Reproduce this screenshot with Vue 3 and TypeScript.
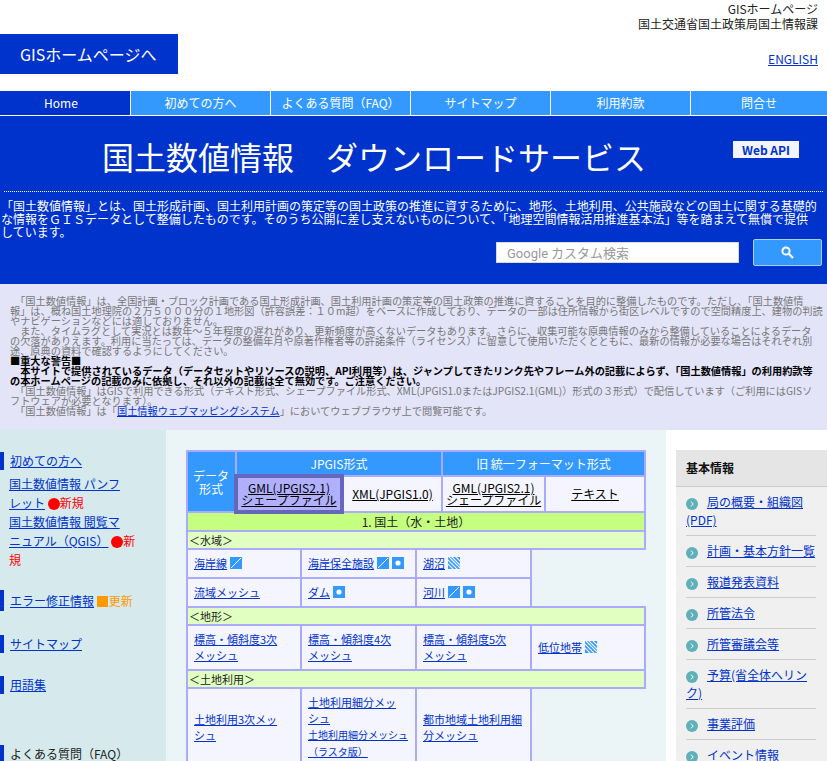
<template>
  <div class="page" lang="ja">
    <header class="head">
      <div class="org">GISホームページ<br />国土交通省国土政策局国土情報課</div>
      <div class="head-row">
        <a class="home-btn">GISホームページへ</a>
        <a class="english" href="#">ENGLISH</a>
      </div>
    </header>

    <nav class="nav">
      <a v-for="(item, i) in navItems" :key="item" class="nav-item" :class="{ active: i === 0 }">{{ item }}</a>
    </nav>

    <section class="hero">
      <div class="hero-top">
        <h1>国土数値情報　ダウンロードサービス</h1>
        <span class="badge">Web API</span>
      </div>
      <p class="hero-text">
        「国土数値情報」とは、国土形成計画、国土利用計画の策定等の国土政策の推進に資するために、地形、土地利用、公共施設などの国土に関する基礎的な情報をＧＩＳデータとして整備したものです。そのうち公開に差し支えないものについて、「地理空間情報活用推進基本法」等を踏まえて無償で提供しています。
      </p>
      <div class="search">
        <div class="search-box"><span class="google">Google</span> カスタム検索</div>
        <button class="search-btn" type="button">
          <svg width="13" height="13" viewBox="0 0 13 13">
            <circle cx="5" cy="5" r="3.6" fill="none" stroke="#fff" stroke-width="2" />
            <path d="M7.8 7.8 L12 12" stroke="#fff" stroke-width="2.2" />
          </svg>
        </button>
      </div>
    </section>

    <section class="notice">
      <p class="p-wide">　「国土数値情報」は、全国計画・ブロック計画である国土形成計画、国土利用計画の策定等の国土政策の推進に資することを目的に整備したものです。ただし、「国土数値情<br />報」は、概ね国土地理院の２万５０００分の１地形図（許容誤差：１０m超）をベースに作成しており、データの一部は住所情報から街区レベルですので空間精度上、建物の判読やナビゲーションなどには適しておりません。</p>
      <p class="p-narrow">　また、タイムラグとして実況とは数年～５年程度の遅れがあり、更新頻度が高くないデータもあります。さらに、収集可能な原典情報のみから整備していることによるデータの欠落がありえます。利用に当たっては、データの整備年月や原著作権者等の許諾条件（ライセンス）に留意して使用いただくとともに、最新の情報が必要な場合はそれぞれ別途、原典の資料で確認するようにしてください。</p>
      <p class="warn">■重大な警告■</p>
      <p class="warn">　本サイトで提供されているデータ（データセットやリソースの説明、API利用等）は、ジャンプしてきたリンク先やフレーム外の記載によらず、「国土数値情報」の利用約款等の本ホームページの記載のみに依拠し、それ以外の記載は全て無効です。ご注意ください。</p>
      <p class="p-mid">　「国土数値情報」はGISで利用できる形式（テキスト形式、シェープファイル形式、XML(JPGIS1.0またはJPGIS2.1(GML)）形式の３形式）で配信しています（ご利用にはGISソフトウェアが必要となります）。</p>
      <p>　「国土数値情報」は「<a href="#">国土情報ウェブマッピングシステム</a>」においてウェブブラウザ上で閲覧可能です。</p>
    </section>

    <div class="columns">
      <aside class="left">
        <div class="side-group first">
          <a href="#">初めての方へ</a>
        </div>
        <ul class="side-sub">
          <li><a href="#">国土数値情報 パンフレット</a> <span class="new"><i class="dot"></i>新規</span></li>
          <li><a href="#">国土数値情報 閲覧マニュアル（QGIS）</a> <span class="new"><i class="dot"></i>新規</span></li>
        </ul>
        <div class="side-group err">
          <a href="#">エラー修正情報</a> <span class="upd"><i class="sq"></i>更新</span>
        </div>
        <div class="side-group map"><a href="#">サイトマップ</a></div>
        <div class="side-group glossary"><a href="#">用語集</a></div>
        <div class="side-group faq">よくある質問（FAQ）</div>
      </aside>

      <main class="center">
        <table class="fmt">
          <colgroup>
            <col class="c-a" /><col class="c-b" /><col class="c-c" /><col class="c-d" /><col class="c-e" />
          </colgroup>
          <tbody>
            <tr class="fmt-top">
              <th rowspan="2">データ<br />形式</th>
              <th colspan="2">JPGIS形式</th>
              <th colspan="2">旧 統一フォーマット形式</th>
            </tr>
            <tr class="fmt-sub">
              <td class="selected"><a href="#">GML(JPGIS2.1)<br />シェープファイル</a></td>
              <td><a href="#">XML(JPGIS1.0)</a></td>
              <td><a href="#">GML(JPGIS2.1)<br />シェープファイル</a></td>
              <td><a href="#">テキスト</a></td>
            </tr>
            <tr><td class="cat" colspan="5">1. 国土（水・土地）</td></tr>
          </tbody>
        </table>

        <table class="data">
          <colgroup>
            <col class="d-a" /><col class="d-b" /><col class="d-c" /><col class="d-d" />
          </colgroup>
          <tbody>
            <template v-for="sec in sections" :key="sec.title">
              <tr><td class="sub" colspan="4">{{ sec.title }}</td></tr>
              <tr v-for="(row, r) in sec.rows" :key="r">
                <td v-for="cell in row" :key="cell.label" class="cell">
                  <template v-for="(part, p) in cell.label.split('|')" :key="p">
                    <a href="#" :class="{ small: p > 0 }">{{ part }}</a><br v-if="p < cell.label.split('|').length - 1" />
                  </template>
                  <svg v-for="ic in cell.icons || []" :key="ic" class="ico" width="12" height="12" viewBox="0 0 12 12">
                    <rect width="12" height="12" fill="#3399ff" />
                    <path v-if="ic === 'line'" d="M1 11 L11 1" stroke="#fff" stroke-width="1" />
                    <circle v-if="ic === 'point'" cx="6" cy="6" r="2.6" fill="#fff" />
                    <path
                      v-if="ic === 'area'"
                      d="M-1 2 L10 13 M-1 -2 L14 13 M2 -2 L14 10 M6 -2 L14 6 M-1 6 L6 13"
                      stroke="#fff"
                      stroke-width="1.1"
                    />
                  </svg>
                </td>
              </tr>
            </template>
          </tbody>
        </table>
      </main>

      <aside class="right">
        <div class="box">
          <div class="box-head">基本情報</div>
          <ul class="box-list">
            <li v-for="item in infoItems" :key="item">
              <svg class="arrow" width="12" height="12" viewBox="0 0 12 12">
                <circle cx="6" cy="6" r="6" fill="#5fb0b8" />
                <path d="M5 3.6 L7.2 6 L5 8.4" fill="none" stroke="#fff" stroke-width="1" />
              </svg>
              <a href="#">{{ item }}</a>
            </li>
          </ul>
        </div>
      </aside>
    </div>
  </div>
</template>

<script setup lang="ts">
type Cell = { label: string; icons?: string[] }

const navItems = ['Home', '初めての方へ', 'よくある質問（FAQ）', 'サイトマップ', '利用約款', '問合せ']

const sections: { title: string; rows: Cell[][] }[] = [
  {
    title: '＜水域＞',
    rows: [
      [
        { label: '海岸線', icons: ['line'] },
        { label: '海岸保全施設', icons: ['line', 'point'] },
        { label: '湖沼', icons: ['area'] }
      ],
      [
        { label: '流域メッシュ' },
        { label: 'ダム', icons: ['point'] },
        { label: '河川', icons: ['line', 'point'] }
      ]
    ]
  },
  {
    title: '＜地形＞',
    rows: [
      [
        { label: '標高・傾斜度3次メッシュ' },
        { label: '標高・傾斜度4次メッシュ' },
        { label: '標高・傾斜度5次メッシュ' },
        { label: '低位地帯', icons: ['area'] }
      ]
    ]
  },
  {
    title: '＜土地利用＞',
    rows: [
      [
        { label: '土地利用3次メッシュ' },
        { label: '土地利用細分メッシュ|土地利用細分メッシュ（ラスタ版）' },
        { label: '都市地域土地利用細分メッシュ' }
      ]
    ]
  }
]

const infoItems = [
  '局の概要・組織図(PDF)',
  '計画・基本方針一覧',
  '報道発表資料',
  '所管法令',
  '所管審議会等',
  '予算(省全体へリンク)',
  '事業評価',
  'イベント情報'
]
</script>

<style>
html,
body {
  height: 100%;
  overflow: hidden;
}
</style>

<style scoped>
.page {
  font-family: "Noto Sans CJK JP", sans-serif;
  font-size: 12px;
  color: #222;
  height: 761px;
  overflow: hidden;
  line-break: strict;
}

a {
  color: #0033cc;
}

.head {
  padding-top: 1px;
  height: 90px;
  box-sizing: border-box;
}

.org {
  text-align: right;
  line-height: 15px;
  padding-right: 9px;
  color: #222;
}

.head-row {
  display: flex;
  justify-content: space-between;
  align-items: flex-end;
  margin-top: 3px;
  padding-right: 9px;
}

.home-btn {
  width: 178px;
  height: 40px;
  background: #0033cc;
  color: #fff;
  font-size: 16px;
  line-height: 40px;
  padding-left: 20px;
  box-sizing: border-box;
}

.english {
  margin-bottom: 7px;
  line-height: 16px;
}

.nav {
  display: flex;
  margin-top: 1px;
  background: #3399ff;
  height: 24px;
  border-bottom: 1px solid #fff;
}

.nav-item {
  width: 140px;
  flex: none;
  box-sizing: border-box;
  text-align: center;
  color: #fff;
  line-height: 24px;
  border-right: 1px solid #fff;
}

.nav-item:first-child {
  width: 131px;
  padding-right: 8px;
}

.nav-item:last-child {
  border-right: none;
  flex: 1;
}

.nav-item.active {
  background: #0033cc;
}

.hero {
  background: #0033cc;
  color: #fff;
  height: 168px;
  box-sizing: border-box;
  overflow: hidden;
}

.hero-top {
  display: flex;
  align-items: flex-start;
  height: 75px;
  margin: 0 4px;
  padding-left: 98px;
  border-bottom: 1px dotted #fff;
}

h1 {
  margin: 19px 0 0;
  font-size: 32px;
  font-weight: 400;
  line-height: 42px;
  white-space: nowrap;
}

.badge {
  margin: 25px 0 0 auto;
  margin-right: 24px;
  width: 66px;
  height: 17px;
  line-height: 17px;
  background: #f2f5ff;
  color: #0033cc;
  font-weight: 700;
  text-align: center;
}

.hero-text {
  margin: 7px 0 0;
  padding: 0 8px 0 1px;
  line-height: 13px;
}

.search {
  display: flex;
  justify-content: flex-end;
  align-items: center;
  padding-right: 5px;
  margin-top: 1px;
}

.search-box {
  width: 243px;
  height: 21px;
  box-sizing: border-box;
  background: #fff;
  border: 1px solid #d9d9d9;
  color: #999;
  font-size: 13px;
  line-height: 19px;
  padding-left: 10px;
}

.google {
  font-family: Roboto, sans-serif;
}

.search-btn {
  width: 69px;
  height: 27px;
  margin-left: 14px;
  padding: 0;
  background: #3399ff;
  border: 1px solid #a9cfff;
  border-radius: 2px;
  display: flex;
  align-items: center;
  justify-content: center;
}

.notice {
  background: #e3e4f8;
  height: 146px;
  box-sizing: border-box;
  padding: 12px 0 0 10px;
  font-size: 10.2px;
  line-height: 10px;
  color: #777;
}

.notice p {
  margin: 0;
  padding-right: 8px;
}

.notice .p-wide {
  padding-right: 3px;
}

.notice .p-narrow {
  padding-right: 13px;
}

.notice .warn {
  color: #000;
  font-weight: 700;
  padding-right: 12px;
}

.columns {
  display: flex;
  align-items: stretch;
  height: 331px;
}

.left {
  width: 166px;
  flex: none;
  background: #d6eaed;
  box-sizing: border-box;
  padding-top: 22px;
  padding-right: 24px;
}

.side-group {
  border-left: 4px solid #0033cc;
  padding-left: 6px;
  line-height: 18px;
}

.side-sub {
  list-style: none;
  margin: 0;
  padding: 4px 0 0 9px;
  line-height: 19px;
}

.new {
  color: #ff0000;
}

.upd {
  color: #ff9900;
}

.dot {
  display: inline-block;
  width: 12px;
  height: 12px;
  border-radius: 50%;
  background: #ff0000;
  vertical-align: -2px;
}

.sq {
  display: inline-block;
  width: 11px;
  height: 11px;
  background: #ff9900;
  vertical-align: -1px;
  margin-right: 1px;
}

.side-group.err {
  margin-top: 21px;
  line-height: 21px;
}

.side-group.map {
  margin-top: 24px;
}

.side-group.glossary {
  margin-top: 23px;
}

.side-group.faq {
  margin-top: 51px;
  color: #222;
}

.center {
  width: 500px;
  flex: none;
  background: #ebf4f6;
  box-sizing: border-box;
  padding: 20px 0 0 20px;
  font-size: 11px;
}

table {
  border-collapse: collapse;
  table-layout: fixed;
  width: 458px;
}

.fmt {
  border: 2px solid #aaaaff;
}

.c-a {
  width: 49px;
}

.c-b {
  width: 106px;
}

.c-c {
  width: 100px;
}

.c-d {
  width: 103px;
}

.c-e {
  width: 100px;
}

.fmt th {
  background: #3399ff;
  color: #fff;
  font-weight: 400;
  font-size: 12px;
  border: 2px solid #aaaaff;
  line-height: 13px;
  padding: 0;
}

.fmt-top th {
  height: 22px;
}

.fmt-sub td {
  height: 32px;
  background: #f5f5ff;
  border: 2px solid #aaaaff;
  text-align: center;
  font-size: 12px;
  line-height: 12px;
  padding: 0;
  white-space: nowrap;
}

.fmt-sub a {
  color: #000;
}

.fmt-sub td.selected {
  background: #b0b0ff;
  border: 4px solid #6666bb;
}

.cat {
  background: #c4ff80;
  border: 2px solid #aaaaff;
  text-align: center;
  height: 16px;
  line-height: 16px;
  padding: 0;
  font-size: 12px;
  color: #222;
}

.data {
  margin-top: -2px;
}

.d-a {
  width: 114px;
}

.d-b {
  width: 115px;
}

.d-c {
  width: 115px;
}

.d-d {
  width: 114px;
}

.sub {
  background: #e0ffc0;
  border: 2px solid #aaaaff;
  height: 16px;
  line-height: 16px;
  padding: 0 0 0 1px;
  font-size: 11px;
  color: #222;
}

.cell {
  background: #f5f5ff;
  border: 2px solid #aaaaff;
  padding: 5px 6px 6px 6px;
  line-height: 16px;
  height: 16px;
}

.cell a.small {
  font-size: 10px;
}

.ico {
  margin-left: 3px;
  vertical-align: -1px;
}

.right {
  flex: 1;
  background: #fff;
  padding: 20px 0 0 10px;
}

.box {
  background: #f0f0f0;
  height: 320px;
}

.box-head {
  height: 37px;
  box-sizing: border-box;
  background: #e5e5e5;
  border-bottom: 1px solid #ccc;
  padding-left: 10px;
  line-height: 36px;
  font-weight: 700;
  color: #111;
}

.box-list {
  list-style: none;
  margin: 0 11px 0 10px;
  padding: 0;
}

.box-list li {
  padding: 6px 0;
  line-height: 18px;
  border-bottom: 1px solid #ccc;
}

.arrow {
  margin-right: 9px;
  vertical-align: -3px;
}
</style>
